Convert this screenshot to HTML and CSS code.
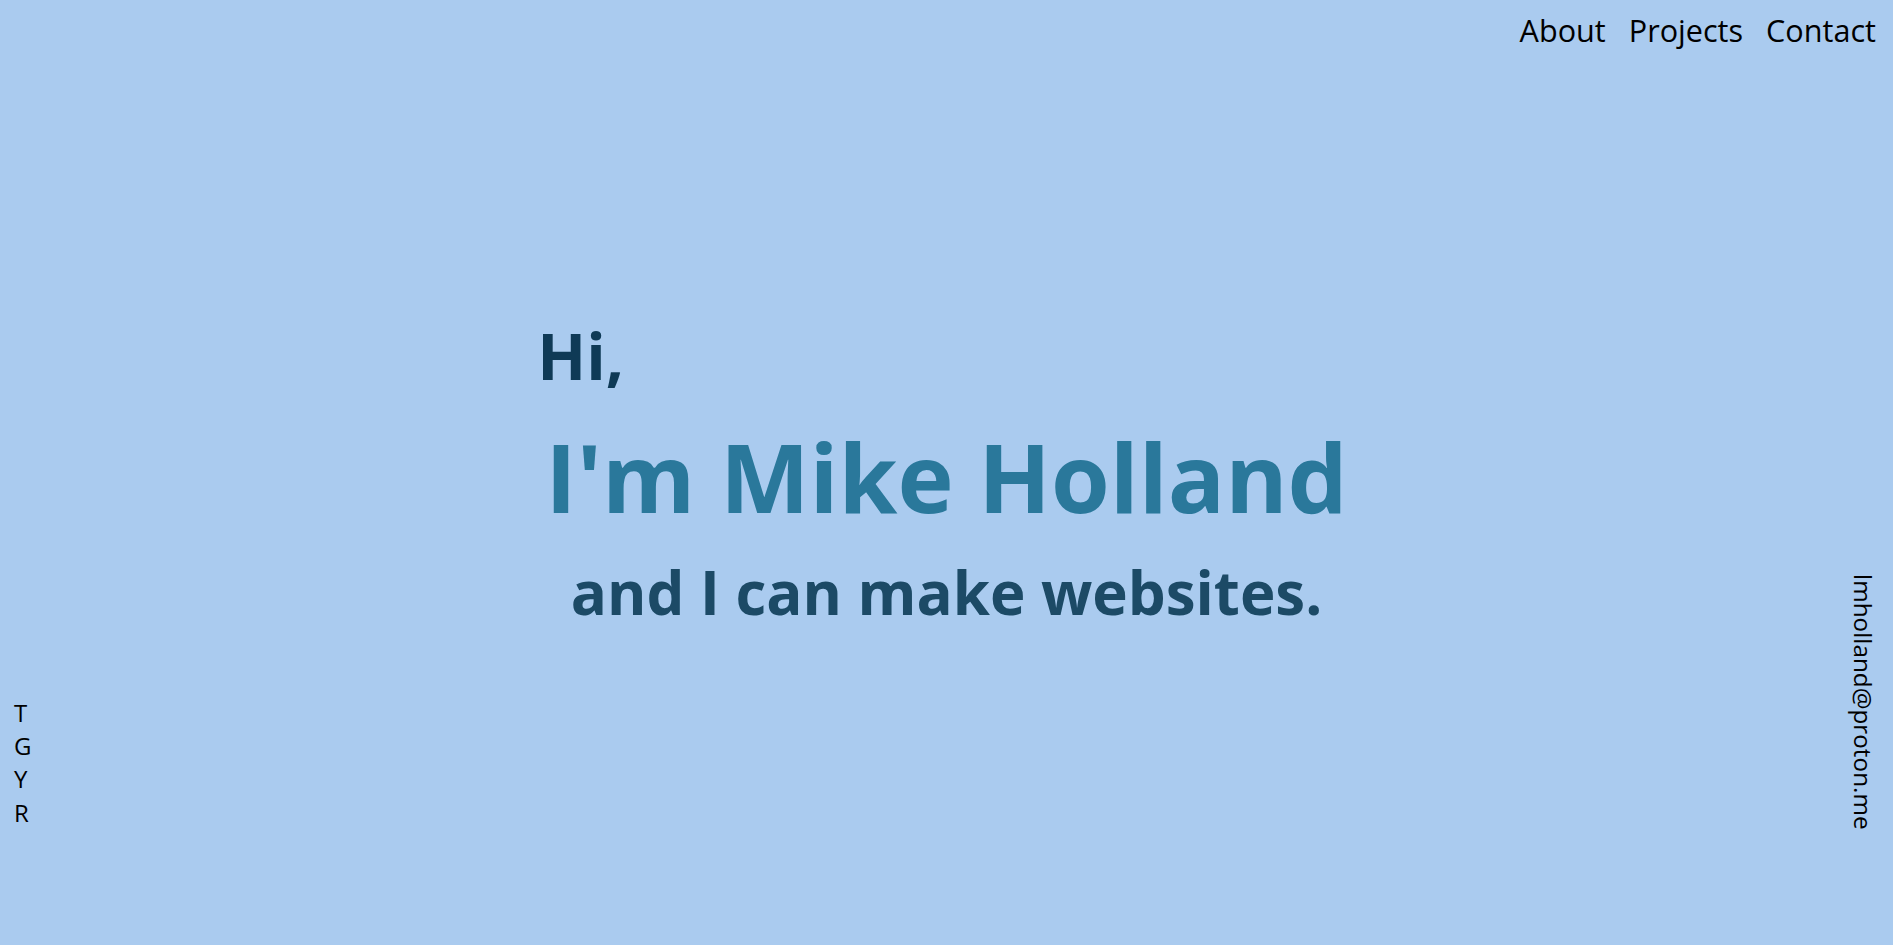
FILE: index.html
```html
<!DOCTYPE html>
<html lang="en">
<head>
<meta charset="utf-8">
<title>Mike Holland</title>
<link rel="stylesheet" href="styles.css">
</head>
<body>
<div class="page">
  <header class="topbar">
    <nav class="nav">
      <a href="#about" class="nav-link">About</a>
      <a href="#projects" class="nav-link">Projects</a>
      <a href="#contact" class="nav-link">Contact</a>
    </nav>
  </header>
  <main class="main">
    <aside class="socials">
      <ul class="social-list">
        <li><a href="#" class="social-link">T</a></li>
        <li><a href="#" class="social-link">G</a></li>
        <li><a href="#" class="social-link">Y</a></li>
        <li><a href="#" class="social-link">R</a></li>
      </ul>
    </aside>
    <section class="hero">
      <p class="hero-hi">Hi,</p>
      <h1 class="hero-name">I'm Mike Holland</h1>
      <p class="hero-sub">and I can make websites.</p>
    </section>
    <aside class="mail">
      <a href="#" class="mail-link">lmholland@proton.me</a>
    </aside>
  </main>
</div>
</body>
</html>
```

FILE: styles.css
```css
* { box-sizing: border-box; }

html, body {
  margin: 0;
  padding: 0;
}

body {
  background: #aacbef;
  font-family: "Open Sans", "Noto Sans", sans-serif;
  color: #000;
}

.page {
  min-height: 100vh;
  display: grid;
  grid-template-rows: auto 1fr;
}

.topbar {
  display: flex;
  justify-content: flex-end;
  padding: 9px 17px 0 0;
}

.nav {
  display: flex;
  gap: 23px;
}

.nav-link {
  color: #000;
  text-decoration: none;
  font-size: 30.6px;
  line-height: 42px;
}

.main {
  display: grid;
  grid-template-columns: 60px 1fr 60px;
}

.socials {
  align-self: end;
  padding: 0 0 116px 14px;
}

.social-list {
  list-style: none;
  margin: 0;
  padding: 0;
}

.social-link {
  display: block;
  color: #000;
  text-decoration: none;
  font-size: 24px;
  line-height: 33.3px;
}

.hero {
  justify-self: center;
  width: fit-content;
  margin-top: 267px;
  display: flex;
  flex-direction: column;
}

.hero-hi {
  margin: 0 0 0 -8px;
  font-size: 64px;
  font-weight: 700;
  line-height: 1.2;
  color: #0f3a56;
}

.hero-name {
  margin: 24px 0 0;
  font-size: 95px;
  font-weight: 700;
  line-height: 1.2;
  color: #2a789b;
  white-space: nowrap;
}

.hero-sub {
  margin: 23px 0 0;
  font-size: 60px;
  font-weight: 700;
  line-height: 1.2;
  color: #1c4a66;
  text-align: center;
  white-space: nowrap;
}

.mail {
  align-self: end;
  justify-self: end;
  padding: 0 15px 115px 0;
}

.mail-link {
  display: block;
  writing-mode: vertical-rl;
  color: #000;
  text-decoration: none;
  font-size: 24.3px;
  line-height: 1.2;
}
```
